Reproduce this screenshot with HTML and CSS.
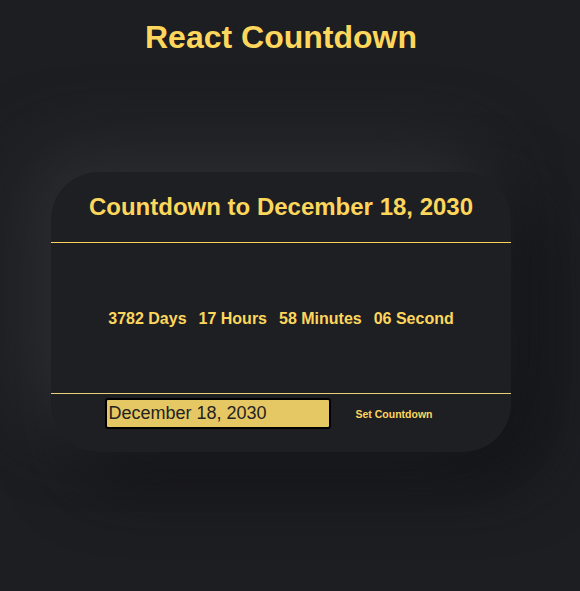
FILE: index.html
```html
<!DOCTYPE html>
<html lang="en">
<head>
<meta charset="utf-8">
<title>React Countdown</title>
<link rel="stylesheet" href="styles.css">
</head>
<body>
<div class="app">
  <h1 class="title">React Countdown</h1>
  <div class="card">
    <div class="card-head">
      <h2 class="card-title">Countdown to December 18, 2030</h2>
    </div>
    <div class="counter">
      <span class="unit">3782 Days</span>
      <span class="unit">17 Hours</span>
      <span class="unit">58 Minutes</span>
      <span class="unit">06 Second</span>
    </div>
    <div class="controls">
      <input class="date-input" type="text" value="December 18, 2030">
      <button class="set-btn" type="button">Set Countdown</button>
    </div>
  </div>
</div>
</body>
</html>
```
FILE: styles.css
```css
html, body {
  margin: 0;
  padding: 0;
  background: #1d1e22;
  height: 100%;
}
body {
  font-family: "Liberation Sans", Arial, sans-serif;
  color: #fdd65c;
}
.app {
  width: 562px;
  display: flex;
  flex-direction: column;
  align-items: center;
}
.title {
  margin: 19px 0 0;
  font-size: 32px;
  line-height: 37px;
  font-weight: bold;
  color: #fdd65c;
}
.card {
  margin-top: 116px;
  width: 460px;
  height: 280px;
  border-radius: 48px;
  background: #1e1f23;
  box-shadow: -24px -24px 70px #2c2d32, 24px 24px 70px #101113;
  display: flex;
  flex-direction: column;
  overflow: hidden;
}
.card-head {
  height: 70px;
  display: flex;
  align-items: center;
  justify-content: center;
  border-bottom: 1px solid #f9d35c;
}
.card-title {
  margin: 0;
  font-size: 24px;
  font-weight: bold;
  color: #fdd65c;
}
.counter {
  height: 149px;
  padding-top: 1px;
  display: flex;
  align-items: center;
  justify-content: center;
  gap: 12px;
  font-size: 16px;
  font-weight: bold;
  border-bottom: 1px solid #e8cf7a;
}
.controls {
  display: flex;
  justify-content: center;
  align-items: center;
  padding-top: 4px;
}
.date-input {
  box-sizing: border-box;
  width: 226px;
  height: 31px;
  border: 2px solid #000;
  border-radius: 3px;
  background: #e5c763;
  color: #222;
  font-family: "Liberation Sans", Arial, sans-serif;
  font-size: 18px;
  padding: 0 2px;
  outline: none;
}
.set-btn {
  background: none;
  border: none;
  padding: 0 25px;
  font-family: "Liberation Sans", Arial, sans-serif;
  font-size: 10.5px;
  font-weight: bold;
  color: #fdd65c;
}
```
